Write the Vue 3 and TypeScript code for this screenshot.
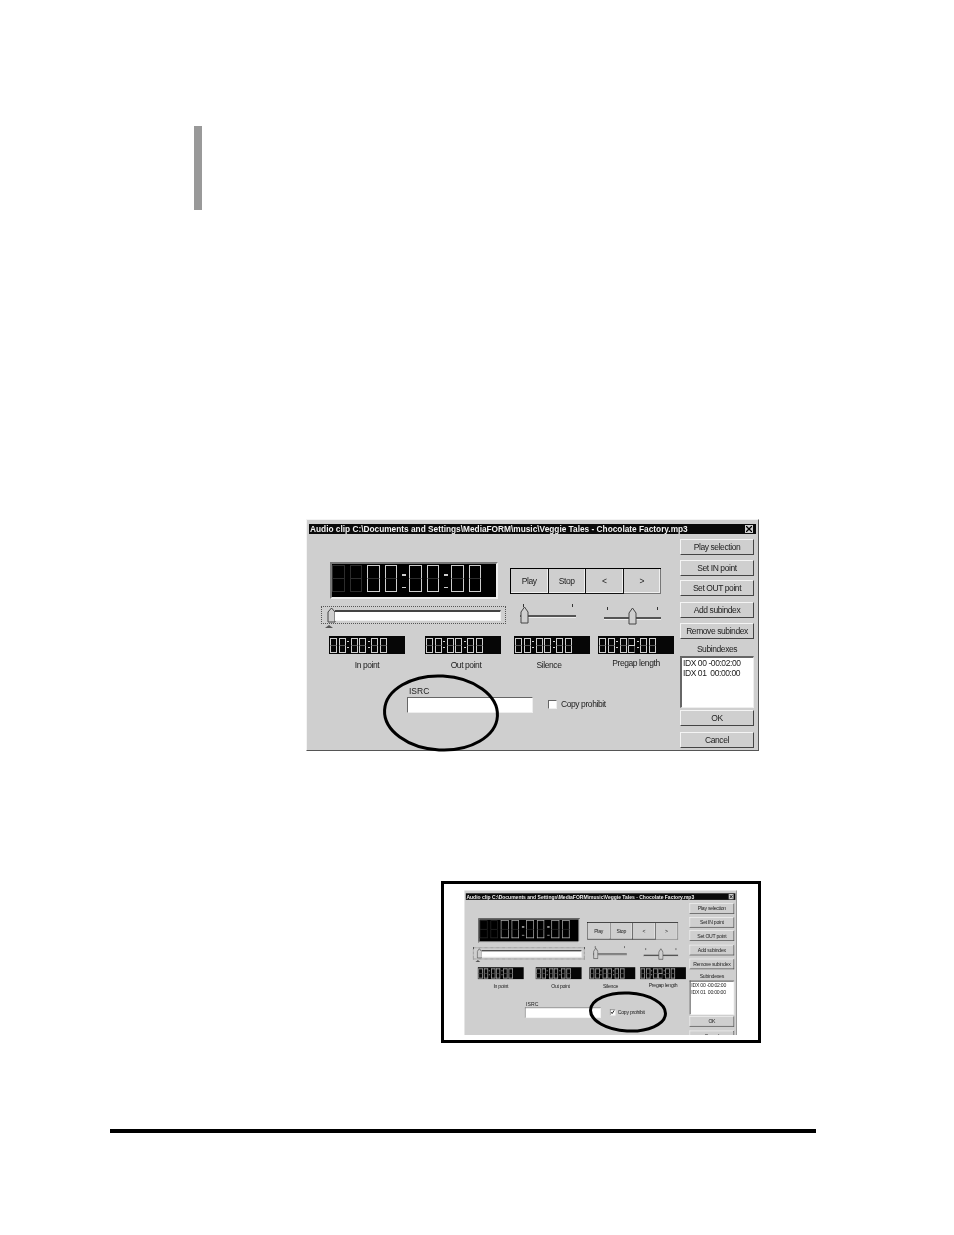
<script setup lang="ts">
interface Ring { w: number; h: number; rx: number; ry: number }
interface Figure { id: string; checked: boolean; ring: Ring }
interface Cell { kind: 'digit' | 'sep'; top: string[]; bottom: string[] }

const figures: Figure[] = [
  { id: 'plain', checked: false, ring: { w: 120, h: 82, rx: 56.5, ry: 37 } },
  { id: 'framed', checked: true, ring: { w: 84, h: 46, rx: 37.5, ry: 19 } },
]
const sideTop = ['Play selection', 'Set IN point', 'Set OUT point', 'Add subindex', 'Remove subindex']
const transport = ['Play', 'Stop', '<', '>']
const subindexes = ['IDX 00 -00:02:00', 'IDX 01  00:00:00']

const SEGMENTS: Record<string, string> = { '0': 'abcdef', '2': 'abged', '8': 'abcdefg', ' ': '' }

function cells(value: string): Cell[] {
  return [...value].map((ch) => {
    if (ch === ':') return { kind: 'sep', top: [], bottom: [] }
    const lit = SEGMENTS[ch] ?? ''
    return {
      kind: 'digit',
      top: [...lit].filter((s) => 'abfg'.includes(s)),
      bottom: [...lit].filter((s) => 'cde'.includes(s)),
    }
  })
}

const mainDisplay = cells('  00:00:00')
const readouts = [
  { label: 'In point', cells: cells('00:00:00') },
  { label: 'Out point', cells: cells('00:00:00') },
  { label: 'Silence', cells: cells('00:00:00') },
  { label: 'Pregap length', cells: cells('00:02:00') },
]
</script>

<template>
  <div class="page">
    <div class="side-mark"></div>

    <div v-for="fig in figures" :key="fig.id" class="figure" :class="`figure-${fig.id}`">
      <div class="viewport">
        <div class="dialog">
          <div class="titlebar">
            <span class="title">Audio clip C:\Documents and Settings\MediaFORM\music\Veggie Tales - Chocolate Factory.mp3</span>
            <span class="close">
              <svg width="6" height="6" viewBox="0 0 6 6"><path d="M0 0L6 6M6 0L0 6" stroke="#000" stroke-width="1.3" /></svg>
            </span>
          </div>

          <div class="body">
            <div class="main">
              <div class="row-display">
                <div class="display" aria-label="88:00:00:00">
                  <template v-for="(c, i) in mainDisplay" :key="i">
                    <span v-if="c.kind === 'sep'" class="sep"><i></i><i></i></span>
                    <span v-else class="digit">
                      <span class="seg-top" :class="c.top"></span>
                      <span class="seg-bottom" :class="c.bottom"></span>
                    </span>
                  </template>
                </div>
                <div class="transport">
                  <button v-for="t in transport" :key="t" class="t-btn">{{ t }}</button>
                </div>
              </div>

              <div class="row-sliders">
                <div class="seek">
                  <div class="seek-thumb-col">
                    <svg class="thumb" width="9" height="16" viewBox="0 0 9 16"><path d="M1 5L4.5 1L8 5V15H1Z" fill="#cfcfcf" stroke="#444" /></svg>
                  </div>
                  <div class="seek-track"></div>
                  <span class="seek-mark"></span>
                </div>
                <div class="slider slider-a">
                  <div class="ticks"><i></i><i></i></div>
                  <div class="rail"></div>
                  <svg class="thumb-s" width="9" height="18" viewBox="0 0 9 18"><path d="M1 6L4.5 1L8 6V17H1Z" fill="#cfcfcf" stroke="#444" /></svg>
                </div>
                <div class="slider slider-b">
                  <div class="ticks"><i></i><i></i></div>
                  <div class="rail"></div>
                  <svg class="thumb-s" width="9" height="18" viewBox="0 0 9 18"><path d="M1 6L4.5 1L8 6V17H1Z" fill="#cfcfcf" stroke="#444" /></svg>
                </div>
              </div>

              <div class="row-readouts">
                <div v-for="r in readouts" :key="r.label" class="readout">
                  <div class="lcd" :aria-label="r.label">
                    <template v-for="(c, i) in r.cells" :key="i">
                      <span v-if="c.kind === 'sep'" class="lcd-sep"><i></i><i></i></span>
                      <span v-else class="digit digit-s">
                        <span class="seg-top" :class="c.top"></span>
                        <span class="seg-bottom" :class="c.bottom"></span>
                      </span>
                    </template>
                  </div>
                  <span class="readout-label">{{ r.label }}</span>
                </div>
              </div>

              <div class="row-isrc">
                <div class="isrc">
                  <span class="isrc-label">ISRC</span>
                  <div class="sunken isrc-input"></div>
                </div>
                <div class="copy">
                  <span class="sunken checkbox">
                    <svg v-if="fig.checked" width="8" height="8" viewBox="0 0 8 8"><path d="M1 4L3 6.5L7 1" fill="none" stroke="#000" stroke-width="1.6" /></svg>
                  </span>
                  <span>Copy prohibit</span>
                </div>
              </div>
            </div>

            <div class="side">
              <button v-for="b in sideTop" :key="b" class="raised side-btn">{{ b }}</button>
              <span class="list-label">Subindexes</span>
              <div class="sunken listbox">
                <div v-for="s in subindexes" :key="s" class="list-item">{{ s }}</div>
              </div>
              <button class="raised side-btn ok">OK</button>
              <button class="raised side-btn cancel">Cancel</button>
            </div>
          </div>
        </div>
      </div>
      <svg class="ring" :width="fig.ring.w" :height="fig.ring.h" :viewBox="`0 0 ${fig.ring.w} ${fig.ring.h}`">
        <ellipse :cx="fig.ring.w / 2" :cy="fig.ring.h / 2" :rx="fig.ring.rx" :ry="fig.ring.ry" fill="none" stroke="#000" stroke-width="3" :transform="`rotate(3 ${fig.ring.w / 2} ${fig.ring.h / 2})`" />
      </svg>
    </div>

    <div class="rule"></div>
  </div>
</template>

<style>
html, body { background: #fff; }
</style>

<style scoped>
.page {
  width: 954px;
  height: 1235px;
  overflow: hidden;
  background: #fff;
  padding-top: 126px;
  box-sizing: border-box;
  font-family: "Liberation Sans", Arial, sans-serif;
}
.side-mark { width: 8px; height: 84px; margin-left: 194px; background: #999; }

.figure { position: relative; }
.figure-plain { margin: 309px 0 0 306px; width: 453px; height: 232px; }
.figure-framed {
  margin: 130px 0 0 441px;
  width: 320px;
  height: 162px;
  box-sizing: border-box;
  border: 3px solid #000;
  padding: 6px 0 0 20px;
}
.figure-framed .viewport { width: 273px; height: 145px; overflow: hidden; }
.figure-framed .dialog { transform: scale(0.603, 0.66); transform-origin: 0 0; filter: blur(0.45px); }

.ring { position: absolute; }
.figure-plain .ring { left: 75px; top: 153px; }
.figure-framed .ring { left: 142px; top: 105px; }

.rule { width: 706px; height: 4px; margin: 86px 0 0 110px; background: #000; }

.dialog {
  width: 453px;
  height: 232px;
  box-sizing: border-box;
  background: #cfcfcf;
  border-top: 1px solid #f4f4f4;
  border-left: 1px solid #f4f4f4;
  border-right: 1px solid #555;
  border-bottom: 1px solid #555;
  padding: 4px 2px 0 2px;
  font-size: 8.5px;
  letter-spacing: -0.42px;
  color: #222;
  filter: blur(0.3px);
}
.titlebar {
  height: 10px;
  background: #0a0a0a;
  display: flex;
  align-items: center;
  justify-content: space-between;
  padding: 0 3px 0 1px;
}
.title { color: #f2f2f2; font-weight: 700; font-size: 8.3px; letter-spacing: 0; white-space: nowrap; }
.close {
  width: 8px;
  height: 8px;
  background: #cfcfcf;
  display: flex;
  align-items: center;
  justify-content: center;
}

.body { display: flex; }
.main { width: 371px; padding-left: 12px; box-sizing: border-box; }

.row-display { display: flex; margin-top: 28px; padding-left: 9px; }
.display {
  width: 168px;
  height: 37px;
  box-sizing: border-box;
  background: #000;
  border: 2px solid;
  border-color: #777 #eee #eee #777;
  padding: 1px 0 0 0;
  display: flex;
  gap: 5px;
  --on: #cdcdcd;
  --off: #2c2c2c;
}
.digit { display: flex; flex-direction: column; width: 12.5px; height: 27px; flex: none; }
.seg-top, .seg-bottom {
  display: block;
  box-sizing: border-box;
  border: 1.5px solid var(--off);
}
.seg-top { height: 14px; }
.seg-bottom { height: 13px; border-top: 0; }
.seg-top.a { border-top-color: var(--on); }
.seg-top.b { border-right-color: var(--on); }
.seg-top.f { border-left-color: var(--on); }
.seg-top.g { border-bottom-color: var(--on); }
.seg-bottom.c { border-right-color: var(--on); }
.seg-bottom.d { border-bottom-color: var(--on); }
.seg-bottom.e { border-left-color: var(--on); }

.sep { width: 4px; margin-right: -2px; display: flex; flex-direction: column; gap: 11px; padding-top: 9px; }
.sep i { display: block; height: 1.5px; background: var(--on); }

.transport {
  display: flex;
  margin: 6px 0 0 12px;
  height: 26px;
  border-left: 1.5px solid #000;
  border-top: 1.5px solid #000;
  box-sizing: border-box;
}
.t-btn {
  width: 37.5px;
  padding: 0;
  background: #cfcfcf;
  border: 0;
  border-right: 1.5px solid #111;
  border-bottom: 1.5px solid #111;
  box-shadow: inset -1px -1px 0 #f0f0f0;
  font: inherit;
  letter-spacing: inherit;
  color: inherit;
}
.t-btn:last-child { border-right-color: #777; border-bottom-color: #777; }

.row-sliders { display: flex; height: 32px; margin-top: 5px; }
.seek {
  width: 185px;
  height: 18px;
  margin-top: 2px;
  box-sizing: border-box;
  border: 1px dotted #555;
  position: relative;
  display: flex;
  align-items: center;
  padding-left: 5px;
}
.seek-thumb-col { width: 8px; height: 16px; }
.thumb { display: block; }
.seek-track {
  width: 166px;
  height: 11px;
  box-sizing: border-box;
  background: #fff;
  border-top: 2px solid #444;
  border-bottom: 1px solid #eee;
  border-right: 1px solid #eee;
}
.seek-mark {
  position: absolute;
  left: 3px;
  top: 18px;
  width: 0;
  height: 0;
  border-left: 4px solid transparent;
  border-right: 4px solid transparent;
  border-bottom: 3px solid #555;
}
.slider { position: relative; height: 28px; }
.slider-a { width: 56px; margin-left: 14px; }
.slider-b { width: 57px; margin-left: 28px; margin-top: 3px; }
.ticks { display: flex; justify-content: space-between; padding: 0 3px; height: 4px; }
.ticks i { width: 1px; height: 3px; background: #333; }
.rail { height: 2px; margin-top: 7px; background: #555; border-bottom: 1px solid #eee; }
.slider-b .rail { margin-top: 6px; }
.thumb-s { position: absolute; top: 2px; }
.slider-a .thumb-s { left: 0; }
.slider-b .thumb-s { left: 24px; top: 0; }

.row-readouts { display: flex; margin-top: 0; padding-left: 8px; height: 46px; }
.readout { display: flex; flex-direction: column; }
.readout:nth-child(2) { margin-left: 20px; }
.readout:nth-child(3) { margin-left: 13px; }
.readout:nth-child(4) { margin-left: 8px; }
.lcd {
  width: 76px;
  height: 18px;
  box-sizing: border-box;
  background: #060606;
  display: flex;
  gap: 1.5px;
  padding: 1.5px 0 0 1px;
  --on: #cfcfcf;
  --off: #555;
}
.digit-s { width: 7px; height: 15px; }
.digit-s .seg-top, .digit-s .seg-bottom { border-width: 1px; }
.digit-s .seg-top { height: 8px; }
.digit-s .seg-bottom { height: 7px; border-top: 0; }
.lcd-sep { width: 2px; display: flex; flex-direction: column; gap: 5px; padding-top: 3px; }
.lcd-sep i { display: block; height: 1px; background: var(--on); }
.readout-label { text-align: center; margin-top: 6px; }
.readout:nth-child(2) .readout-label { margin-left: 6px; }
.readout:nth-child(3) .readout-label { margin-right: 6px; }
.readout:nth-child(4) .readout-label { margin-top: 4px; }

.row-isrc { display: flex; align-items: flex-end; padding-left: 86px; margin-top: 4px; }
.isrc { display: flex; flex-direction: column; }
.isrc-label { margin-left: 2px; line-height: 10px; letter-spacing: 0; }
.isrc-input { width: 126px; height: 16px; margin-top: 1px; }
.copy { display: flex; align-items: center; gap: 4px; margin: 0 0 4px 15px; }
.sunken {
  display: block;
  box-sizing: border-box;
  background: #fff;
  border: 1px solid;
  border-color: #666 #eee #eee #666;
}
.checkbox { width: 9px; height: 9px; display: flex; align-items: center; justify-content: center; }

.side { width: 74px; display: flex; flex-direction: column; padding-top: 5px; align-items: stretch; }
.raised {
  box-sizing: border-box;
  background: #cfcfcf;
  border: 1px solid;
  border-color: #f4f4f4 #444 #444 #f4f4f4;
  padding: 0;
  font: inherit;
  letter-spacing: inherit;
  color: inherit;
  white-space: nowrap;
}
.side-btn { height: 16px; margin-bottom: 4.5px; }
.side-btn:nth-child(4) { margin-top: 1px; margin-bottom: 5.5px; }
.list-label { text-align: center; line-height: 11px; margin-top: 0; }
.listbox {
  height: 52px;
  margin-top: 1px;
  padding: 0 1px;
  line-height: 10px;
  border-width: 2px 1px 1px 2px;
  overflow: hidden;
}
.list-item { white-space: pre; }
.side-btn.ok { margin-top: 2px; margin-bottom: 6px; }
.side-btn.cancel { margin: 0; }
</style>
